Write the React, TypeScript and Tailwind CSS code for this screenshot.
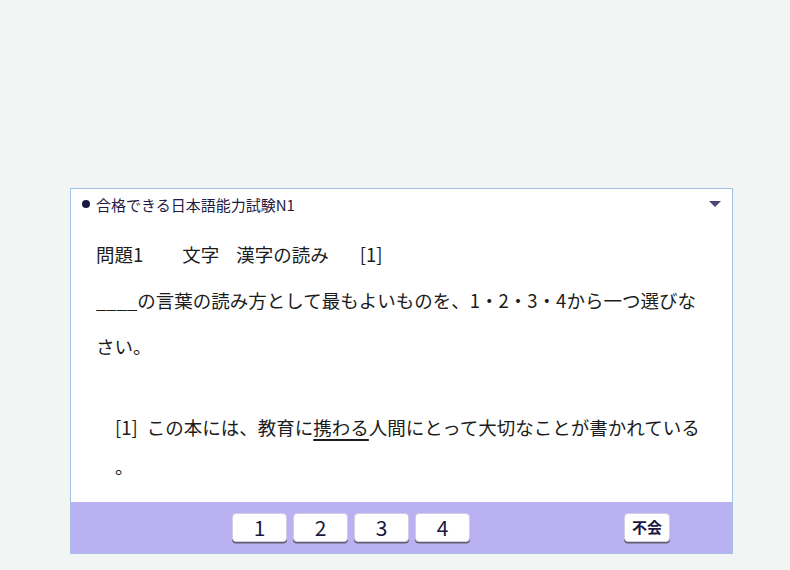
import React from "react";

const font = { fontFamily: '"Noto Sans CJK JP", "Noto Sans", sans-serif' };

function Btn({ label, wide = false, bold = false }: { label: string; wide?: boolean; bold?: boolean }) {
  return (
    <div
      className={`${wide ? "w-[46px]" : "w-[55px]"} h-[29px] bg-white rounded-[4px] border border-[#d2cde6] shadow-[0_1.5px_0.5px_#5e5e6e] flex items-center justify-center text-[#1b1742] ${bold ? "text-[15px] font-bold" : "text-[21px]"}`}
    >
      {label}
    </div>
  );
}

export default function App() {
  return (
    <div className="w-[790px] h-[570px] bg-[#f3f5f4] pt-[188px] pl-[70px]" style={font}>
      <div className="w-[663px] h-[366px] border border-[#a4c1e7] bg-white flex flex-col">
        <div className="h-[30px] flex items-center pl-[11px] pr-[11px] shrink-0">
          <span className="w-[8px] h-[8px] rounded-full bg-[#1a1740] mr-[6px]" />
          <span className="text-[15px] text-[#1f1c44] leading-none">合格できる日本語能力試験N1</span>
          <svg className="ml-auto" width="12" height="6" viewBox="0 0 12 6">
            <path d="M0 0 L12 0 L6 6 Z" fill="#4b4573" />
          </svg>
        </div>
        <div className="flex-1 px-[25px] pt-[12px] text-[18.5px] text-[#1c1c1c] whitespace-pre">
          <div className="h-[46px] leading-[46px]">
            問題1<span className="inline-block w-[39px]" />文字<span className="inline-block w-[17px]" />漢字の読み<span className="inline-block w-[31px]" />[1]
          </div>
          <div className="h-[46px] leading-[46px]">____の言葉の読み方として最もよいものを、1・2・3・4から一つ選びな</div>
          <div className="h-[46px] leading-[46px]">さい。</div>
          <div className="h-[35px]" />
          <div className="h-[46px] leading-[46px] pl-[19px]">
            [1]<span className="inline-block w-[9px]" />この本には、教育に
            <span className="underline decoration-[1.5px] underline-offset-[4px]">携わる</span>
            人間にとって大切なことが書かれている
          </div>
          <div className="h-[40px] leading-[40px] pl-[19px] -mt-[4px]">。</div>
        </div>
        <div className="h-[51px] bg-[#b9b1f1] flex items-center pl-[161px] gap-[6px] shrink-0">
          <Btn label="1" />
          <Btn label="2" />
          <Btn label="3" />
          <Btn label="4" />
          <div className="ml-[148px]">
            <Btn label="不会" wide bold />
          </div>
        </div>
      </div>
    </div>
  );
}
